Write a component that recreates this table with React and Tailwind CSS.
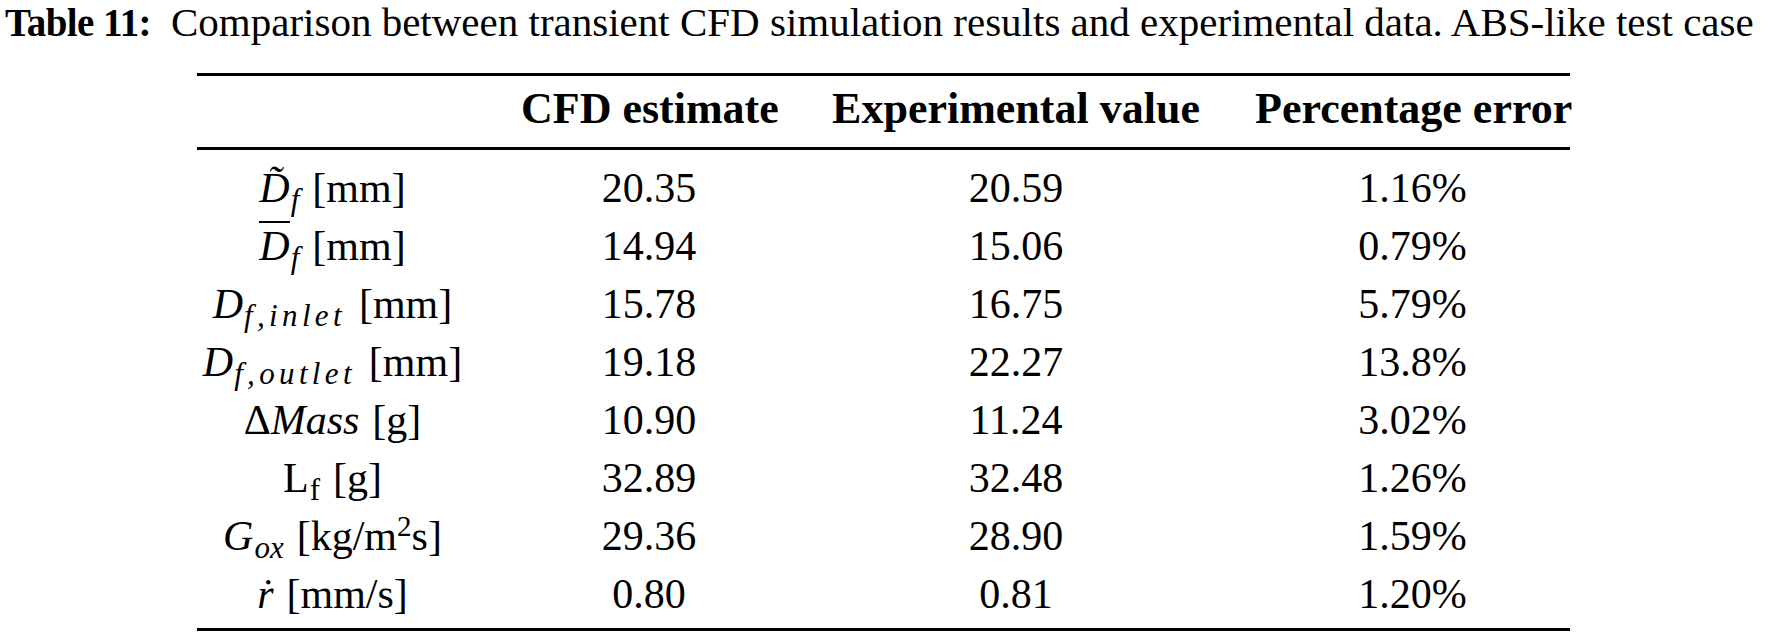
const rows = [
  { key: 'dtilde', cfd: '20.35', exp: '20.59', err: '1.16%' },
  { key: 'dbar', cfd: '14.94', exp: '15.06', err: '0.79%' },
  { key: 'dinlet', cfd: '15.78', exp: '16.75', err: '5.79%' },
  { key: 'doutlet', cfd: '19.18', exp: '22.27', err: '13.8%' },
  { key: 'mass', cfd: '10.90', exp: '11.24', err: '3.02%' },
  { key: 'lf', cfd: '32.89', exp: '32.48', err: '1.26%' },
  { key: 'gox', cfd: '29.36', exp: '28.90', err: '1.59%' },
  { key: 'rdot', cfd: '0.80', exp: '0.81', err: '1.20%' },
];

const Sub = ({ children, italic = true, wide = false }) => (
  <sub className={`text-[31px] ml-[1px] ${italic ? 'italic' : ''} ${wide ? 'tracking-[0.14em]' : ''}`}>{children}</sub>
);

const Unit = ({ children }) => <span className="ml-[13px]">[{children}]</span>;

const Label = ({ k }) => {
  switch (k) {
    case 'dtilde':
      return (
        <span>
          <span className="italic">D&#771;</span>
          <Sub>f</Sub>
          <Unit>mm</Unit>
        </span>
      );
    case 'dbar':
      return (
        <span>
          <span className="italic border-t-[2px] border-black">D</span>
          <Sub>f</Sub>
          <Unit>mm</Unit>
        </span>
      );
    case 'dinlet':
      return (
        <span>
          <span className="italic">D</span>
          <Sub wide>f,inlet</Sub>
          <Unit>mm</Unit>
        </span>
      );
    case 'doutlet':
      return (
        <span>
          <span className="italic">D</span>
          <Sub wide>f,outlet</Sub>
          <Unit>mm</Unit>
        </span>
      );
    case 'mass':
      return (
        <span>
          Δ<span className="italic">Mass</span>
          <Unit>g</Unit>
        </span>
      );
    case 'lf':
      return (
        <span>
          L<Sub italic={false}>f</Sub>
          <Unit>g</Unit>
        </span>
      );
    case 'gox':
      return (
        <span>
          <span className="italic">G</span>
          <Sub>ox</Sub>
          <Unit>
            kg/m<sup className="text-[29px]">2</sup>s
          </Unit>
        </span>
      );
    default:
      return (
        <span>
          <span className="italic">r&#775;</span>
          <Unit>mm/s</Unit>
        </span>
      );
  }
};

const grid = 'grid grid-cols-[271px_256px_372px_315px] gap-x-[53px] text-center whitespace-nowrap';

export default function App() {
  return (
    <div className="w-[1768px] h-[632px] bg-white text-black font-['Liberation_Serif',serif] overflow-hidden">
      <p className="h-[45px] leading-[45px] text-[41px] whitespace-nowrap pl-[5px]">
        <span className="font-bold text-[39px] tracking-[-0.6px]">Table 11:</span>
        <span className="ml-[20px]">
          Comparison between transient CFD simulation results and experimental data. ABS-like test case
        </span>
      </p>

      <div className="ml-[197px] w-[1373px]">
        <div className="mt-[28px] h-[3px] bg-black" />
        <div className={`${grid} h-[71px] pb-[5px] leading-[66px] text-[44px] font-bold`}>
          <div />
          <div>CFD estimate</div>
          <div>Experimental value</div>
          <div>Percentage error</div>
        </div>
        <div className="h-[3px] bg-black" />
        <div className="pt-[9px] pb-[5px]">
          {rows.map((row) => (
            <div key={row.key} className={`${grid} h-[58px] leading-[58px] text-[42px]`}>
              <div>
                <Label k={row.key} />
              </div>
              <div>{row.cfd}</div>
              <div>{row.exp}</div>
              <div>{row.err}</div>
            </div>
          ))}
        </div>
        <div className="h-[3px] bg-black" />
      </div>
    </div>
  );
}
